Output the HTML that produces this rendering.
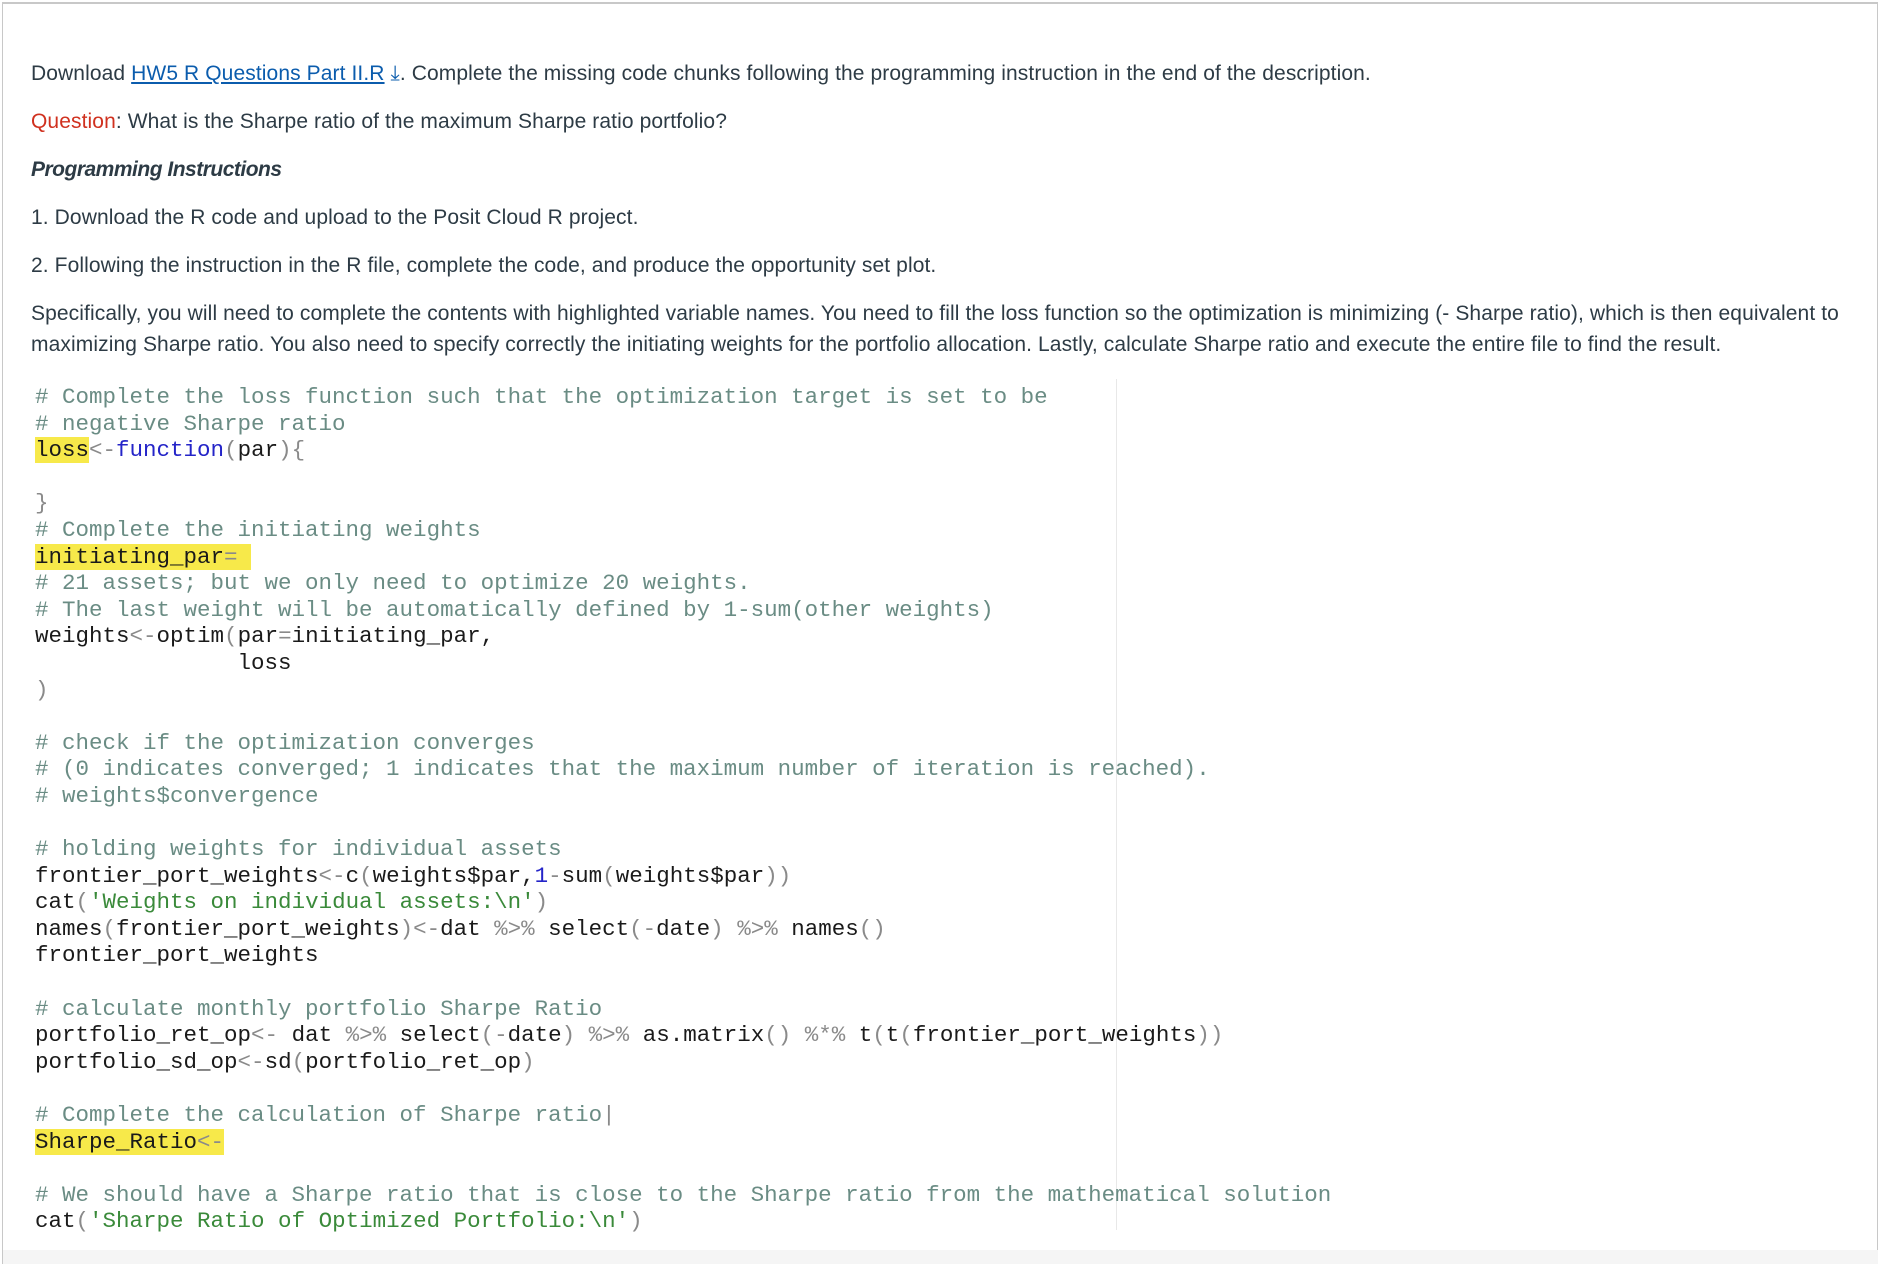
<!DOCTYPE html>
<html><head><meta charset="utf-8"><style>
html,body{margin:0;padding:0;background:#fff;}
body{width:1882px;height:1264px;position:relative;overflow:hidden;font-family:"Liberation Sans",sans-serif;color:#2d3b45;}
.frame{position:absolute;left:2px;top:2px;width:1876px;height:1262px;border-top:2px solid #c8c8c8;border-left:1px solid #c8c8c8;border-right:1px solid #c8c8c8;box-sizing:border-box;}
.foot{position:absolute;left:3px;top:1250px;width:1875px;height:14px;background:#f5f5f5;}
.p{position:absolute;left:31px;font-size:21px;line-height:24px;white-space:nowrap;letter-spacing:0.1px;}
a{color:#0b5cad;text-decoration:underline;}
.red{color:#d0311f;}
pre{position:absolute;left:35px;top:384px;margin:0;font-family:"Liberation Mono",monospace;font-size:22.5px;line-height:26.6px;color:#1a1a1a;}
.c{color:#6a8c84}.o{color:#8a8a8a}.f{color:#2424c8}.s{color:#3a8a3a}.n{color:#2424c8}
.h{background:#f7e94a;}
.vl{position:absolute;left:1116px;top:379px;width:1px;height:851px;background:#e8e8e8;}
</style></head><body>
<div class="frame"></div>
<div class="foot"></div>
<div class="p" style="top:62px">Download <a>HW5 R Questions Part II.R</a> <span style="color:#0b5cad">⤓</span>. Complete the missing code chunks following the programming instruction in the end of the description.</div>
<div class="p" style="top:110px"><span class="red">Question</span>: What is the Sharpe ratio of the maximum Sharpe ratio portfolio?</div>
<div class="p" style="top:158px;letter-spacing:-0.5px"><i><b style="font-weight:600">Programming Instructions</b></i></div>
<div class="p" style="top:206px">1. Download the R code and upload to the Posit Cloud R project.</div>
<div class="p" style="top:254px">2. Following the instruction in the R file, complete the code, and produce the opportunity set plot.</div>
<div class="p" style="top:302px">Specifically, you will need to complete the contents with highlighted variable names. You need to fill the loss function so the optimization is minimizing (- Sharpe ratio), which is then equivalent to</div>
<div class="p" style="top:333px">maximizing Sharpe ratio. You also need to specify correctly the initiating weights for the portfolio allocation. Lastly, calculate Sharpe ratio and execute the entire file to find the result.</div>
<div class="vl"></div>
<pre><span class="c"># Complete the loss function such that the optimization target is set to be</span>
<span class="c"># negative Sharpe ratio</span>
<span class="h">loss</span><span class="o">&lt;-</span><span class="f">function</span><span class="o">(</span>par<span class="o">){</span>

<span class="o">}</span>
<span class="c"># Complete the initiating weights</span>
<span class="h">initiating_par<span class="o">= </span></span>
<span class="c"># 21 assets; but we only need to optimize 20 weights.</span>
<span class="c"># The last weight will be automatically defined by 1-sum(other weights)</span>
weights<span class="o">&lt;-</span>optim<span class="o">(</span>par<span class="o">=</span>initiating_par,
               loss
<span class="o">)</span>

<span class="c"># check if the optimization converges</span>
<span class="c"># (0 indicates converged; 1 indicates that the maximum number of iteration is reached).</span>
<span class="c"># weights$convergence</span>

<span class="c"># holding weights for individual assets</span>
frontier_port_weights<span class="o">&lt;-</span>c<span class="o">(</span>weights$par,<span class="n">1</span><span class="o">-</span>sum<span class="o">(</span>weights$par<span class="o">))</span>
cat<span class="o">(</span><span class="s">'Weights on individual assets:\n'</span><span class="o">)</span>
names<span class="o">(</span>frontier_port_weights<span class="o">)&lt;-</span>dat <span class="o">%&gt;%</span> select<span class="o">(-</span>date<span class="o">)</span> <span class="o">%&gt;%</span> names<span class="o">()</span>
frontier_port_weights

<span class="c"># calculate monthly portfolio Sharpe Ratio</span>
portfolio_ret_op<span class="o">&lt;-</span> dat <span class="o">%&gt;%</span> select<span class="o">(-</span>date<span class="o">)</span> <span class="o">%&gt;%</span> as.matrix<span class="o">()</span> <span class="o">%*%</span> t<span class="o">(</span>t<span class="o">(</span>frontier_port_weights<span class="o">))</span>
portfolio_sd_op<span class="o">&lt;-</span>sd<span class="o">(</span>portfolio_ret_op<span class="o">)</span>

<span class="c"># Complete the calculation of Sharpe ratio</span><span class="o">|</span>
<span class="h">Sharpe_Ratio<span class="o">&lt;-</span></span>

<span class="c"># We should have a Sharpe ratio that is close to the Sharpe ratio from the mathematical solution</span>
cat<span class="o">(</span><span class="s">'Sharpe Ratio of Optimized Portfolio:\n'</span><span class="o">)</span></pre>
</body></html>
